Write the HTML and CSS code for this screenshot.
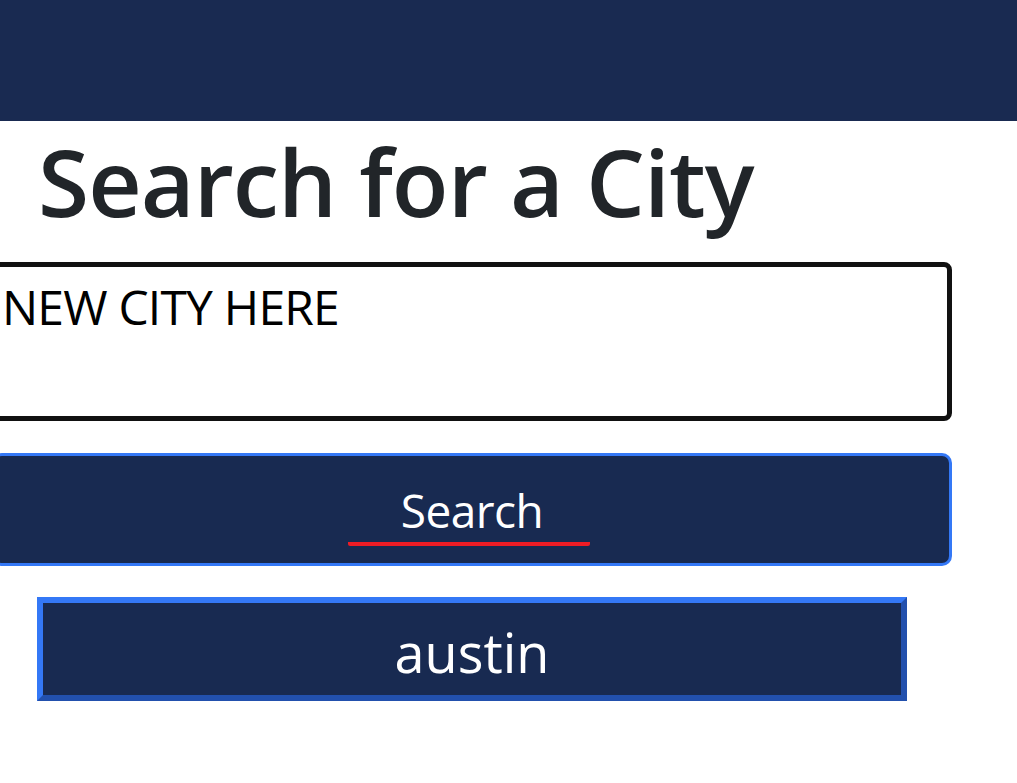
FILE: index.html
```html
<!DOCTYPE html>
<html lang="en">
<head>
<meta charset="utf-8">
<title>Search for a City</title>
<link rel="stylesheet" href="styles.css">
</head>
<body>
<header class="topbar"></header>
<main class="content">
  <h1 class="title">Search for a City</h1>
  <div class="city-field">NEW CITY HERE</div>
  <button class="search-btn" type="button"><span class="search-label">Search</span></button>
  <button class="history-btn" type="button">austin</button>
</main>
</body>
</html>
```

FILE: styles.css
```css
html, body {
  margin: 0;
  padding: 0;
  background: #ffffff;
  overflow: hidden;
}

body {
  font-family: "Open Sans", "Noto Sans", sans-serif;
  color: #212529;
}

.topbar {
  height: 121px;
  background: #192a51;
}

.content {
  width: 960px;
  margin-left: -8px;
  display: flex;
  flex-direction: column;
}

.title {
  margin: 0;
  padding: 0 0 0 46px;
  font-size: 93px;
  font-weight: 600;
  line-height: 120px;
  letter-spacing: -1px;
  color: #212529;
}

.city-field {
  margin-top: 21px;
  height: 142px;
  border: 5px solid #111111;
  border-radius: 8px;
  padding: 7px 0 0 5px;
  font-size: 48px;
  line-height: 66px;
  color: #000000;
  letter-spacing: -0.8px;
}

.search-btn {
  margin-top: 32px;
  height: 113px;
  border: 3px solid #3478f6;
  border-radius: 10px;
  background: #182a51;
  color: #ffffff;
  font-family: inherit;
  font-size: 46px;
  display: flex;
  justify-content: center;
  align-items: flex-start;
  padding: 25px 0 0 0;
}

.search-label {
  display: inline-block;
  width: 242px;
  margin-right: 6px;
  padding-left: 6px;
  box-sizing: border-box;
  line-height: 58px;
  padding-bottom: 3px;
  border-bottom: 4px solid #ee1c25;
  border-radius: 2px;
  text-align: center;
  letter-spacing: -0.5px;
}

.history-btn {
  margin: 31px auto 0;
  width: 870px;
  height: 104px;
  border: 6px solid;
  border-color: #3478f6 #2250ad #2250ad #3478f6;
  background: #182a51;
  color: #ffffff;
  font-family: inherit;
  font-size: 54px;
  line-height: 1;
  padding: 6px 0 0 0;
}
```
